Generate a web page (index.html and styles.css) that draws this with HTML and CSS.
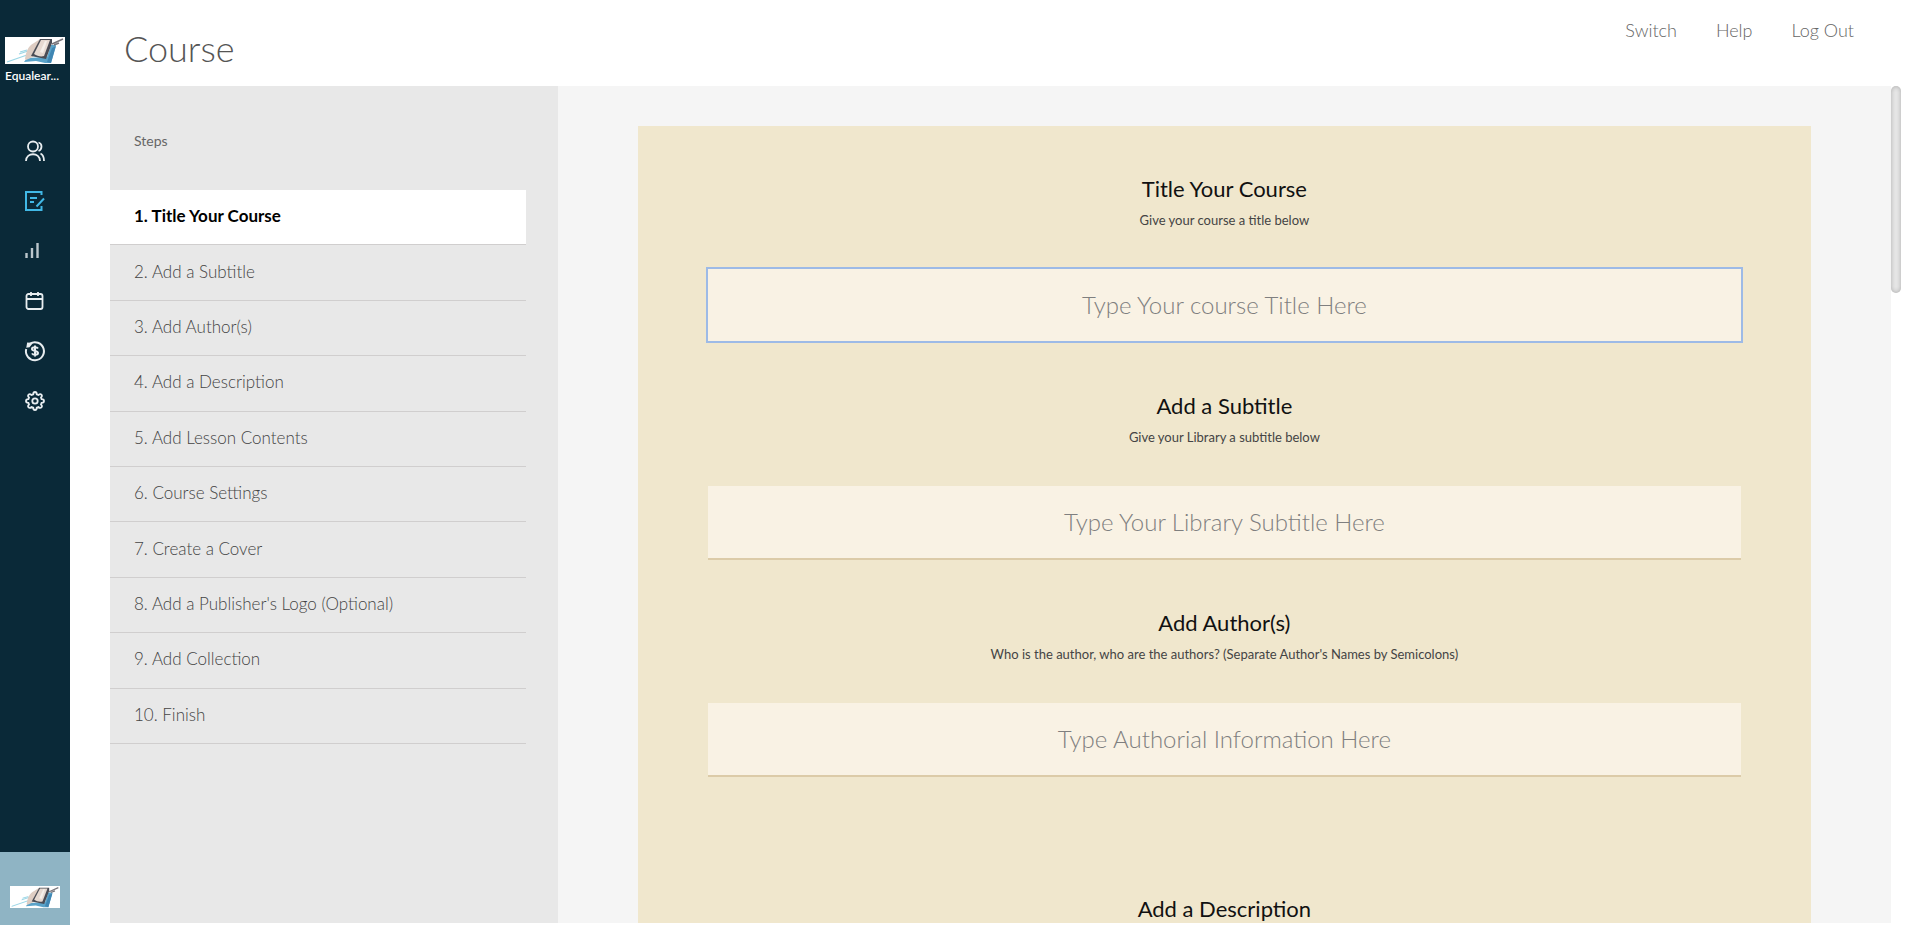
FILE: index.html
```html
<!DOCTYPE html>
<html lang="en">
<head>
    <meta charset="UTF-8">
    <meta name="viewport" content="width=device-width, initial-scale=1.0">
    <title>Course</title>
    <link rel="stylesheet" href="styles.css">
</head>
<body>

    <!-- shared logo artwork -->
    <svg class="sprite" aria-hidden="true">
        <symbol id="logo" viewBox="0 0 60 27" preserveAspectRatio="none">
            <rect width="60" height="27" fill="#fff"/>
            <path d="M2 25L22 18M14 17L23 14M15 15l7-2" stroke="#9ad6e6" stroke-width="1.2" fill="none"/>
            <path d="M19 25l3-4 20-1 4-12 5 0-5 18-6 0-9-2z" fill="#5aa3c9"/>
            <path d="M42 25l5-14 4-2-5 17z" fill="#3f86b3"/>
            <path d="M20 22c1-7 3-13 9-16l6-4-7 18-7 3z" fill="#decdc3"/>
            <path d="M26 19L35 2l12 0 0 4-6 16z" fill="#4a4c55"/>
            <path d="M29 17l7-14 9 0-6 16c-3 1-7 0-10-2z" fill="#e6d9d1"/>
            <path d="M35 15l5-11 2 0-4 12z" fill="#f5efea"/>
            <path d="M47 7l11-5M49 8l5-2" stroke="#77747a" stroke-width="1.4" fill="none"/>
        </symbol>
    </svg>

    <aside class="sidebar">
        <a class="brand" href="#">
            <svg class="brand-logo"><use href="#logo"/></svg>
            <span class="brand-name">Equalear...</span>
        </a>
        <nav class="side-nav" aria-label="Main">
            <a href="#" aria-label="Users">
                <svg viewBox="0 0 20 20"><circle cx="8" cy="5.500" r="5"/><path d="M1 20c0-9 14-9 14 0M13.500 1.500c4 1 4 7 0 8.500M15.500 12.500c2.500 1.300 3.500 4 3.500 7.500"/></svg>
            </a>
            <a href="#" class="active" aria-label="Courses">
                <svg viewBox="0 0 20 20"><path d="M16.500 4V1H1v18h15.500v-4M5 7h7M5 11h4M19 7.500l-7.500 8"/></svg>
            </a>
            <a href="#" class="stats" aria-label="Statistics">
                <svg viewBox="0 0 20 20"><path d="M1.500 17v-5M7 17V7M12.500 17V2"/></svg>
            </a>
            <a href="#" aria-label="Calendar">
                <svg viewBox="0 0 20 20"><rect x="1.500" y="3" width="16" height="15" rx="2"/><path d="M1.500 8h16M6 1v4M13 1v4"/></svg>
            </a>
            <a href="#" class="payments" aria-label="Payments">
                <svg viewBox="0 0 20 20"><path d="M5 2.700A9 9 0 1 1 1.200 8"/><path class="solid" d="M2.500 5.500l.5-3 3 .3-2 2.500z"/><path d="M13 7.500C12 5.800 7 5.700 7 8s6 1.600 6 4-5 2.300-6 .400M10 4.500v11"/></svg>
            </a>
            <a href="#" aria-label="Settings">
                <svg viewBox="0 0 20 20"><circle cx="10" cy="10" r="2.700"/><path d="M8.200 3.400Q8.300 1 10 1t1.800 2.400l1.600.6q1.800-1.600 3-.400t-.400 3l.6 1.600Q19 8.300 19 10t-2.400 1.800l-.6 1.600q1.600 1.800.400 3t-3-.400l-1.600.6Q11.700 19 10 19t-1.800-2.400L6.600 16q-1.800 1.600-3 .400t.400-3l-.6-1.600Q1 11.700 1 10t2.400-1.800L4 6.600q-1.600-1.800-.400-3t3 .400z"/></svg>
            </a>
        </nav>
        <a class="account" href="#" aria-label="Account">
            <svg class="account-logo"><use href="#logo"/></svg>
        </a>
    </aside>

    <div class="page">
        <header class="topbar">
            <h1>Course</h1>
            <nav class="top-links" aria-label="Account links">
                <a href="#">Switch</a>
                <a href="#">Help</a>
                <a href="#">Log Out</a>
            </nav>
        </header>

        <div class="workspace">
            <section class="steps">
                <h2>Steps</h2>
                <ol>
                    <li class="current"><a href="#title">1. Title Your Course</a></li>
                    <li><a href="#subtitle">2. Add a Subtitle</a></li>
                    <li><a href="#authors">3. Add Author(s)</a></li>
                    <li><a href="#description">4. Add a Description</a></li>
                    <li><a href="#">5. Add Lesson Contents</a></li>
                    <li><a href="#">6. Course Settings</a></li>
                    <li><a href="#">7. Create a Cover</a></li>
                    <li><a href="#">8. Add a Publisher's Logo (Optional)</a></li>
                    <li><a href="#">9. Add Collection</a></li>
                    <li><a href="#">10. Finish</a></li>
                </ol>
            </section>

            <main class="editor">
                <form class="card">
                    <div class="field">
                        <label for="title">Title Your Course</label>
                        <p>Give your course a title below</p>
                        <input type="text" id="title" class="selected" placeholder="Type Your course Title Here">
                    </div>
                    <div class="field">
                        <label for="subtitle">Add a Subtitle</label>
                        <p>Give your Library a subtitle below</p>
                        <input type="text" id="subtitle" placeholder="Type Your Library Subtitle Here">
                    </div>
                    <div class="field authors">
                        <label for="authors">Add Author(s)</label>
                        <p>Who is the author, who are the authors? (Separate Author's Names by Semicolons)</p>
                        <input type="text" id="authors" placeholder="Type Authorial Information Here">
                    </div>
                    <div class="field">
                        <label for="description">Add a Description</label>
                        <textarea id="description"></textarea>
                    </div>
                </form>
            </main>
            <div class="scrollbar" aria-hidden="true"><div class="thumb"></div></div>
        </div>
    </div>

</body>
</html>
```

FILE: styles.css
```css
* {
    box-sizing: border-box;
}

body {
    margin: 0;
    height: 100vh;
    display: flex;
    overflow: hidden;
    background: #fff;
    font-family: Lato, sans-serif;
    color: #555;
}

a {
    color: inherit;
    text-decoration: none;
}

.sprite {
    display: none;
}

/* left sidebar */
.sidebar {
    width: 70px;
    flex-shrink: 0;
    display: flex;
    flex-direction: column;
    background: #0a2938;
    color: #fff;
}

.brand {
    padding: 37px 5px 0;
}

.brand-logo {
    display: block;
    width: 100%;
    height: 27px;
}

.brand-name {
    display: block;
    padding-top: 3px;
    font-size: 12px;
    font-weight: 600;
    line-height: 18px;
    white-space: nowrap;
}

.side-nav {
    margin-top: 41px;
    display: flex;
    flex-direction: column;
}

.side-nav a {
    height: 50px;
    display: flex;
    align-items: center;
    justify-content: center;
}

.side-nav svg {
    width: 20px;
    height: 20px;
    fill: none;
    stroke: #e8edf0;
    stroke-width: 1.8;
    overflow: visible;
}

.side-nav .active svg {
    stroke: #41b8e6;
    stroke-width: 2;
}

.side-nav .stats svg {
    stroke: #bcc6cc;
    stroke-width: 2.4;
}

.side-nav .payments svg {
    stroke-width: 2;
}

.side-nav .solid {
    fill: #e8edf0;
}

.account {
    height: 73px;
    margin-top: auto;
    padding: 34px 10px 0;
    background: #8fb4c4;
}

.account-logo {
    display: block;
    width: 100%;
    height: 22px;
}

/* header */
.page {
    flex: 1;
    min-width: 0;
    display: flex;
    flex-direction: column;
    padding: 0 19px 2px 40px;
}

.topbar {
    height: 86px;
    flex-shrink: 0;
    display: flex;
    justify-content: space-between;
    padding: 0 47px 0 14px;
}

h1 {
    margin: 0;
    padding-top: 12px;
    font-size: 36px;
    font-weight: 300;
    line-height: 72px;
}

.top-links {
    display: flex;
    gap: 39px;
    font-size: 18px;
    font-weight: 300;
    line-height: 60px;
    color: #666;
}

/* steps column */
.workspace {
    flex: 1;
    min-height: 0;
    display: flex;
}

.steps {
    width: 25%;
    flex-shrink: 0;
    background: #e8e8e8;
}

.steps h2 {
    margin: 0;
    padding: 45px 24px 39px;
    font-size: 14px;
    font-weight: 400;
    line-height: 20px;
    color: #666;
}

.steps ol {
    list-style: none;
    margin: 0 32px 0 0;
    padding: 0;
    min-height: 554px;
    display: grid;
    grid-auto-rows: 1fr;
}

.steps li {
    display: flex;
    align-items: center;
    padding: 0 24px 3px;
    border-bottom: 1px solid #d0cece;
    font-size: 17px;
    font-weight: 300;
    color: #444;
}

.steps .current {
    background: #fff;
    font-weight: 700;
    color: #000;
}

/* course form */
.editor {
    flex: 1;
    min-width: 0;
    padding: 40px 80px 0;
    background: #f5f5f5;
    overflow: hidden;
}

.card {
    padding: 45px 6% 0;
    background: #f0e7cd;
    text-align: center;
}

.field {
    margin-bottom: 47px;
}

.field.authors {
    margin-bottom: 116px;
}

.field label {
    display: block;
    font-size: 22px;
    line-height: 36px;
    color: #111;
}

.field p {
    margin: 1px 0 37px;
    font-size: 13px;
    line-height: 24px;
    color: #444;
}

.field input,
.field textarea {
    display: block;
    width: 100%;
    height: 72px;
    padding: 0 20px 2px;
    border: none;
    border-radius: 0;
    background: #f9f2e4;
    box-shadow: 0 2px 0 #dccba8;
    font-family: inherit;
    font-size: 24px;
    font-weight: 300;
    text-align: center;
    color: #444;
}

.field input::placeholder {
    color: #7f7f7f;
}

.field input:focus,
.field input.selected {
    outline: 2px solid #9dbae6;
    box-shadow: none;
}

.scrollbar {
    width: 10px;
    flex-shrink: 0;
    background: #fff;
}

.thumb {
    height: 207px;
    border-radius: 5px;
    background: #e8e8e8;
    box-shadow: inset 0 0 5px #aaa;
}
```
